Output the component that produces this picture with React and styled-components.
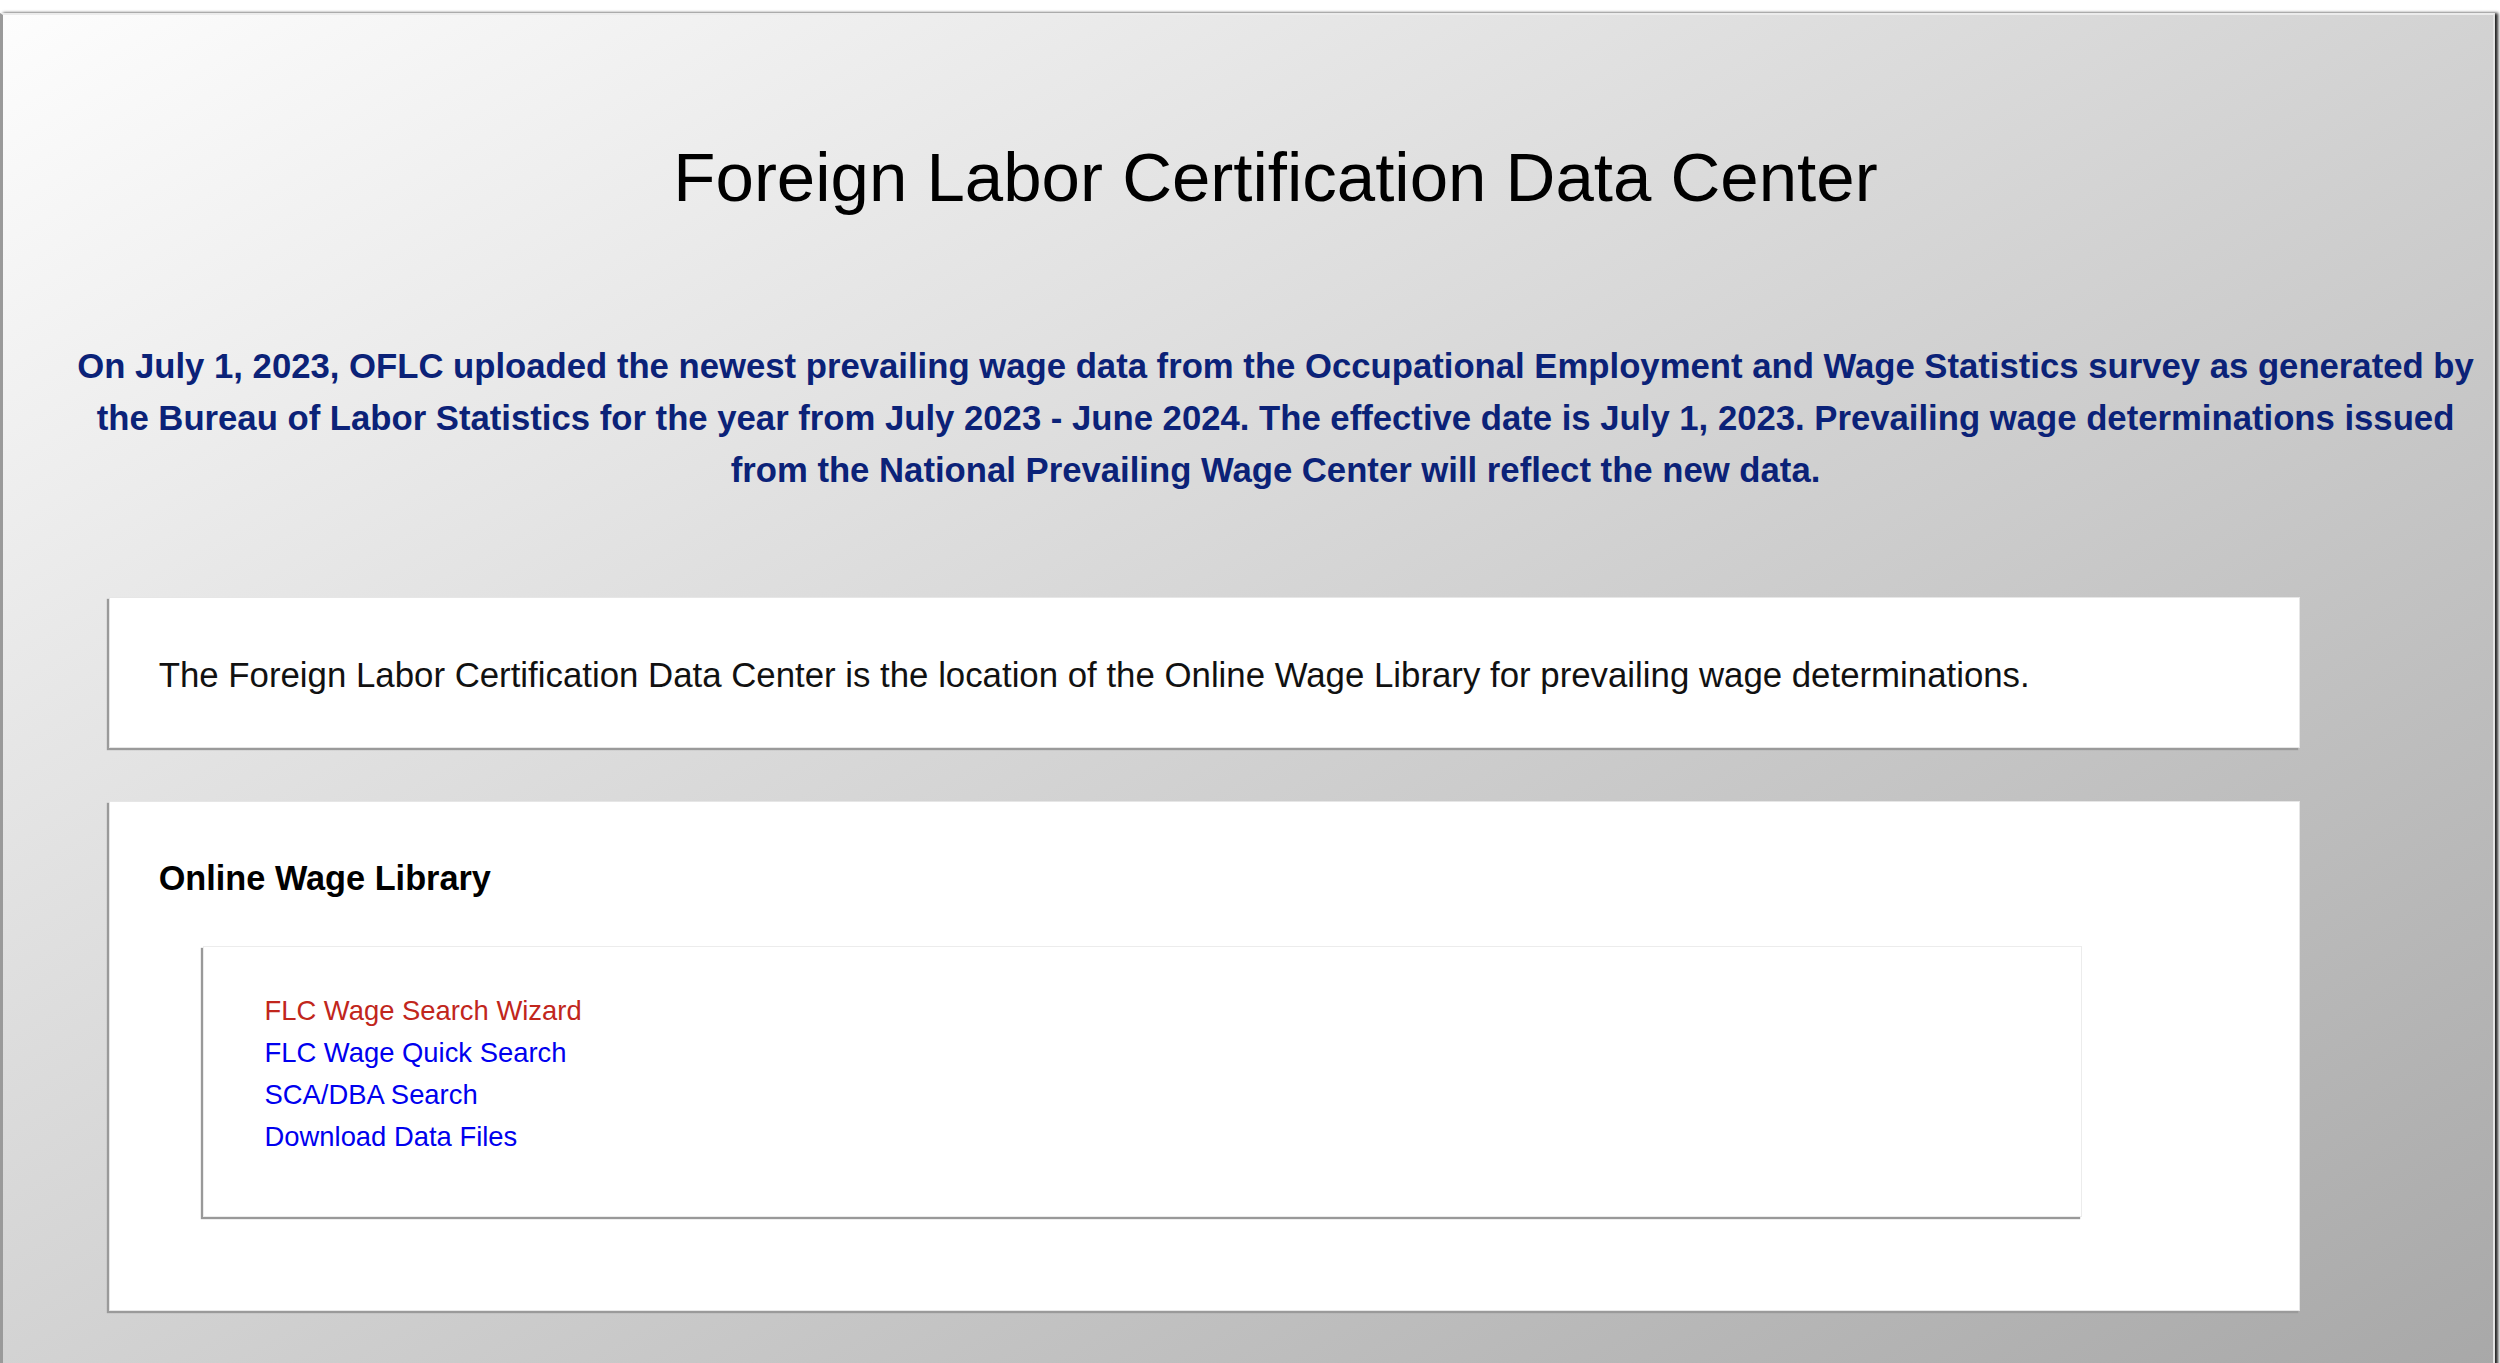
import React from 'react';
import styled, { createGlobalStyle } from 'styled-components';

const links = [
  { label: 'FLC Wage Search Wizard', current: true },
  { label: 'FLC Wage Quick Search' },
  { label: 'SCA/DBA Search' },
  { label: 'Download Data Files' },
];

const App = () => {
  return (
    <Page>
      <GlobalStyle />
      <Frame>
        <Title>Foreign Labor Certification Data Center</Title>

        {/* Announcement */}
        <Notice>
          On July 1, 2023, OFLC uploaded the newest prevailing wage data from the Occupational
          Employment and Wage Statistics survey as generated by the Bureau of Labor Statistics for
          the year from July 2023 - June 2024. The effective date is July 1, 2023. Prevailing wage
          determinations issued from the National Prevailing Wage Center will reflect the new data.
        </Notice>

        <Panel>
          <Intro>
            The Foreign Labor Certification Data Center is the location of the Online Wage Library
            for prevailing wage determinations.
          </Intro>
        </Panel>

        <Panel $gap>
          <PanelTitle>Online Wage Library</PanelTitle>
          <LinkBox>
            {links.map((l) => (
              <NavLink key={l.label} href="#" $current={l.current}>
                {l.label}
              </NavLink>
            ))}
          </LinkBox>
        </Panel>
      </Frame>
    </Page>
  );
};

const GlobalStyle = createGlobalStyle`
  body {
    margin: 0;
    background: #fff;
    font-family: "Liberation Sans", Arial, Helvetica, sans-serif;
  }
`;

const Page = styled.div`
  padding-top: 13px;
`;

const Frame = styled.main`
  box-sizing: border-box;
  width: 2495px;
  min-height: 1350px;
  padding: 123px 0 60px 55px;
  background: linear-gradient(to bottom right, #fdfdfd, #a8a8a8);
  border-top: 2px solid #ececec;
  border-right: 2px solid #e2e2e2;
  border-left: 3px solid #9a9a9a;
  box-shadow: 3px 0 3px #222;
`;

const Title = styled.h1`
  margin: 0;
  font-size: 69px;
  font-weight: 400;
  line-height: 80px;
  color: #000;
  text-align: center;
`;

const Notice = styled.p`
  margin: 122px 0 0;
  padding: 0 10px;
  font-size: 34.7px;
  font-weight: 700;
  line-height: 52px;
  color: #0b2278;
  text-align: center;
`;

const Panel = styled.section`
  box-sizing: border-box;
  width: 90%;
  margin: ${(p) => (p.$gap ? '53px' : '101px')} 0 0 calc(2% + 2px);
  padding: ${(p) => (p.$gap ? '56px 49px 93px' : '57px 49px 52px')};
  background: #fff;
  border: 1px solid #e6e6e6;
  box-shadow: -2px 2px 1px #9a9a9a;
`;

const Intro = styled.p`
  margin: 0;
  font-size: 34.8px;
  line-height: 40px;
  color: #111;
`;

const PanelTitle = styled.h2`
  margin: 0 0 48px;
  font-size: 34.3px;
  font-weight: 700;
  line-height: 40px;
  color: #000;
`;

const LinkBox = styled.div`
  box-sizing: border-box;
  width: calc(90% - 3px);
  margin-left: calc(2% + 2px);
  padding: 43px 61px 58px;
  display: flex;
  flex-direction: column;
  align-items: flex-start;
  background: #fff;
  border: 1px solid #ececec;
  box-shadow: -2px 2px 1px #999;
`;

const NavLink = styled.a`
  font-size: 27.4px;
  line-height: 42px;
  text-decoration: none;
  color: ${(p) => (p.$current ? '#c1261c' : '#0000ee')};
`;

export default App;
